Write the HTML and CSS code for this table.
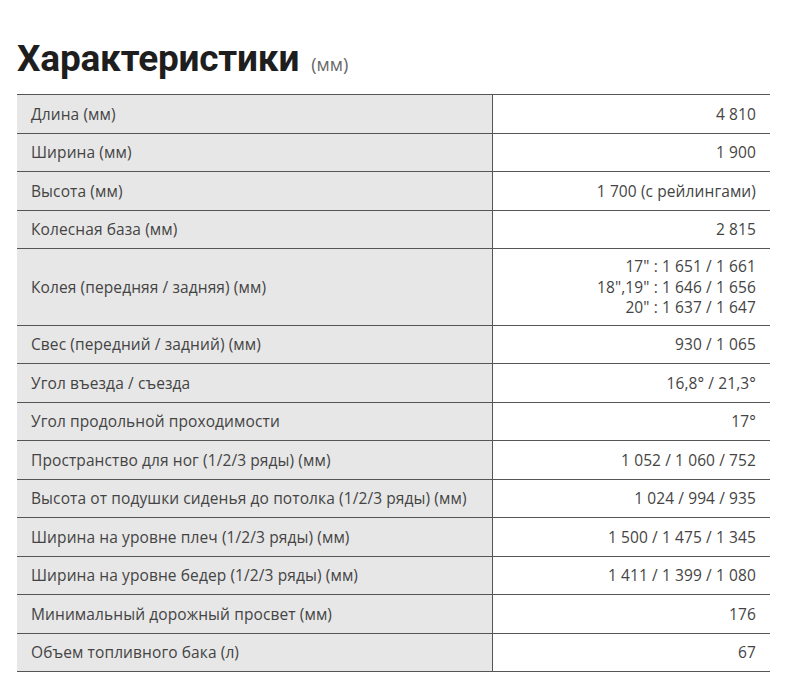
FILE: index.html
```html
<!DOCTYPE html>
<html lang="ru">
<head>
<meta charset="utf-8">
<link rel="stylesheet" href="styles.css">
</head>
<body>
<div class="page">
  <h1 class="title">Характеристики <span class="unit">(мм)</span></h1>
  <table class="specs">
    <tr><td class="k">Длина (мм)</td><td class="v">4 810</td></tr>
    <tr><td class="k">Ширина (мм)</td><td class="v">1 900</td></tr>
    <tr><td class="k">Высота (мм)</td><td class="v">1 700 (с рейлингами)</td></tr>
    <tr><td class="k">Колесная база (мм)</td><td class="v">2 815</td></tr>
    <tr class="tall"><td class="k">Колея (передняя / задняя) (мм)</td><td class="v multi">17" : 1 651 / 1 661<br>18",19" : 1 646 / 1 656<br>20" : 1 637 / 1 647</td></tr>
    <tr><td class="k">Свес (передний / задний) (мм)</td><td class="v">930 / 1 065</td></tr>
    <tr><td class="k">Угол въезда / съезда</td><td class="v">16,8° / 21,3°</td></tr>
    <tr><td class="k">Угол продольной проходимости</td><td class="v">17°</td></tr>
    <tr><td class="k">Пространство для ног (1/2/3 ряды) (мм)</td><td class="v">1 052 / 1 060 / 752</td></tr>
    <tr><td class="k">Высота от подушки сиденья до потолка (1/2/3 ряды) (мм)</td><td class="v">1 024 / 994 / 935</td></tr>
    <tr><td class="k">Ширина на уровне плеч (1/2/3 ряды) (мм)</td><td class="v">1 500 / 1 475 / 1 345</td></tr>
    <tr><td class="k">Ширина на уровне бедер (1/2/3 ряды) (мм)</td><td class="v">1 411 / 1 399 / 1 080</td></tr>
    <tr><td class="k">Минимальный дорожный просвет (мм)</td><td class="v">176</td></tr>
    <tr><td class="k">Объем топливного бака (л)</td><td class="v">67</td></tr>
  </table>
</div>
</body>
</html>
```
FILE: styles.css
```css
html, body {
  margin: 0;
  padding: 0;
  background: #ffffff;
}
.page {
  padding: 37px 18px 0 17px;
  font-family: "Open Sans", "Noto Sans", sans-serif;
}
.title {
  margin: 0 0 13px 0;
  font-family: Roboto, "Open Sans", sans-serif;
  font-size: 37px;
  line-height: 44px;
  height: 44px;
  font-weight: 700;
  color: #1e1e1e;
  letter-spacing: -0.2px;
}
.unit {
  font-family: "Open Sans", sans-serif;
  font-size: 18px;
  font-weight: 400;
  color: #666;
  letter-spacing: 0;
  margin-left: 3px;
}
.specs {
  width: 753px;
  border-collapse: collapse;
  font-size: 15.5px;
  letter-spacing: 0.1px;
  color: #444;
}
.specs td {
  border-top: 1.5px solid #555;
  border-bottom: 1.5px solid #555;
  height: 38.5px;
  padding: 0 14px;
  box-sizing: border-box;
  vertical-align: middle;
}
.specs .k {
  width: 475px;
  background: #e7e7e7;
  border-right: 1.5px solid #555;
}
.specs .v {
  text-align: right;
  background: #fff;
}
.specs .multi {
  line-height: 20.5px;
  padding-top: 7px;
  padding-bottom: 7px;
}
```
